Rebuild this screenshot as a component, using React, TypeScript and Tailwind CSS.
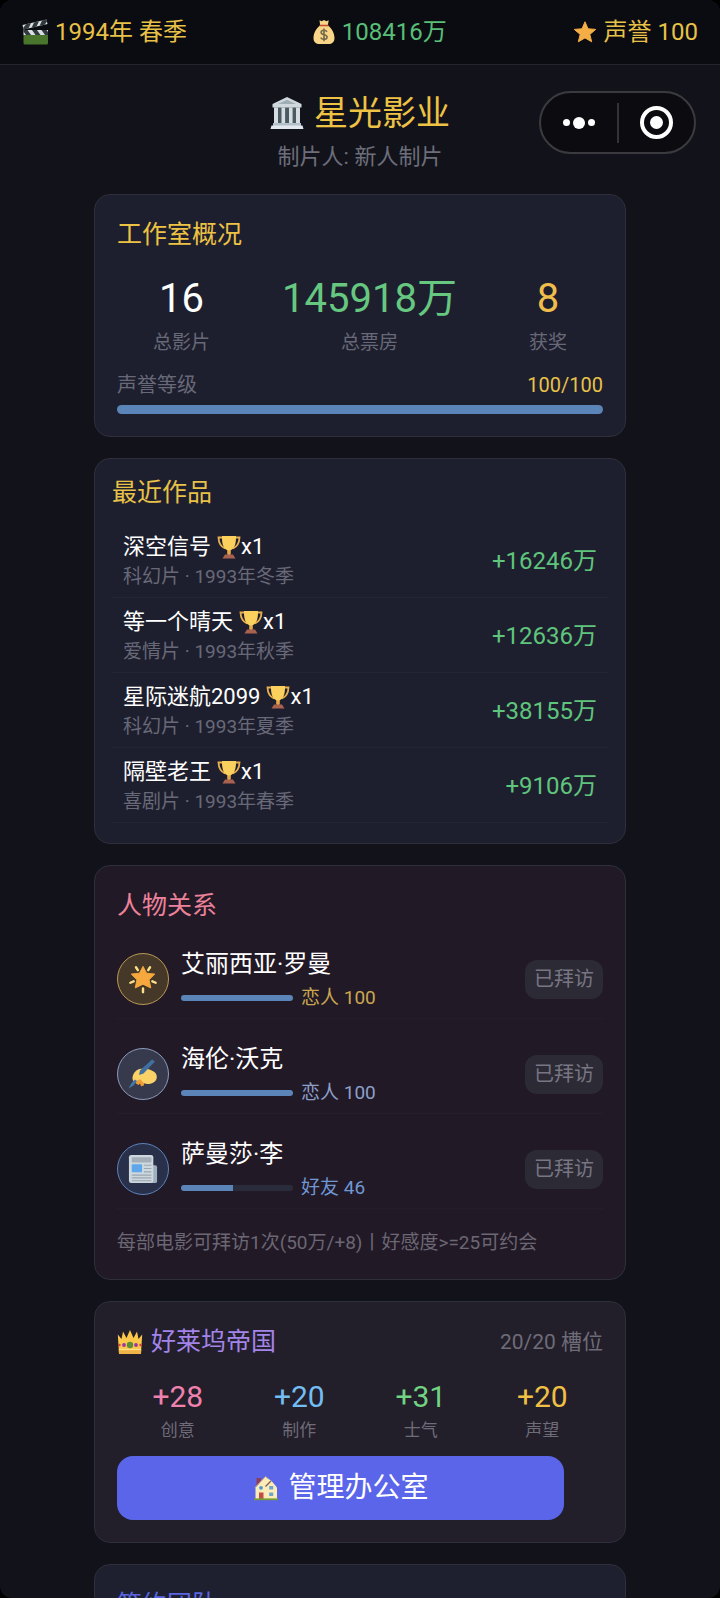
import type { ReactNode } from "react";

const works = [
  { name: "深空信号", meta: "科幻片 · 1993年冬季", income: "+16246万" },
  { name: "等一个晴天", meta: "爱情片 · 1993年秋季", income: "+12636万" },
  { name: "星际迷航2099", meta: "科幻片 · 1993年夏季", income: "+38155万" },
  { name: "隔壁老王", meta: "喜剧片 · 1993年春季", income: "+9106万" },
];

const people = [
  { name: "艾丽西亚·罗曼", level: "恋人", value: 100, icon: <GlowStar />, ring: "border-[#b89a55] bg-[#453829]", text: "text-[#c9a74f]" },
  { name: "海伦·沃克", level: "恋人", value: 100, icon: <WritingHand />, ring: "border-[#8b9bbd] bg-[#373a4c]", text: "text-[#8c9fc9]" },
  { name: "萨曼莎·李", level: "好友", value: 46, icon: <Newspaper />, ring: "border-[#5c83ba] bg-[#29304a]", text: "text-[#6f97d4]" },
];

const bonuses = [
  { value: "+28", label: "创意", color: "text-[#ee82ae]" },
  { value: "+20", label: "制作", color: "text-[#74bdf2]" },
  { value: "+31", label: "士气", color: "text-[#72d382]" },
  { value: "+20", label: "声望", color: "text-[#f0c044]" },
];

function Clapper() {
  return (
    <svg viewBox="0 0 26 26" className="size-[26px] shrink-0" aria-hidden="true">
      <path d="M0.5 6 L24.5 0.5 L25.5 5 L1.5 10.5z" fill="#d9dfe3" />
      <path d="M4 5.2 L9 4 L6.5 9.4 L1.5 10.5 L1.2 9z M12 3.4 L17 2.2 L14.5 7.6 L9.6 8.7z M20 1.5 L24.5 0.5 L25 2.5 L22.5 5.7 L17.6 6.8z" fill="#31393e" />
      <path d="M1.5 11h24.5v5H1.5z" fill="#d9dfe3" />
      <path d="M1.5 11h4l3.5 5h-5l-2.5-3.5z M10 11h5l3.5 5h-5z M19.5 11h5l1.5 2v3h-3z" fill="#31393e" />
      <path d="M1.5 16h24.5v8a1.5 1.5 0 0 1-1.5 1.5H3A1.5 1.5 0 0 1 1.5 24z" fill="#4a752c" />
    </svg>
  );
}

function MoneyBag() {
  return (
    <svg viewBox="0 0 22 26" className="h-[26px] w-[22px] shrink-0" aria-hidden="true">
      <path d="M6.5 1.2l2.2 1L11 1l2.3 1.2 2.4-1-.9 5.3C18.5 9 21.5 14 21.5 19c0 4-2.5 6-6 6h-9c-3.5 0-6-2-6-6 0-5 3-10 6.7-12.5z" fill="#f8d587" />
      <path d="M7 6.500h8" stroke="#c04a33" strokeWidth="1.4" strokeLinecap="round" />
      <path d="M14 12.8c-.6-1-1.700-1.500-3-1.500-1.700 0-2.900.9-2.900 2.200 0 3 6 1.500 6 4.600 0 1.400-1.300 2.300-3.100 2.300-1.500 0-2.700-.6-3.300-1.700M11 9.500v12.700" stroke="#756a4c" strokeWidth="1.6" fill="none" />
    </svg>
  );
}

function Star() {
  return (
    <svg viewBox="0 0 24 24" className="size-6 shrink-0" aria-hidden="true">
      <path d="M12 1.8l3 7 7.700.6-5.900 5 1.900 7.400L12 17.900l-6.700 3.900 1.900-7.400-5.900-5 7.700-.6z" fill="#f5ad45" stroke="#f5ad45" strokeWidth="1" strokeLinejoin="round" />
    </svg>
  );
}

function Temple() {
  return (
    <svg viewBox="0 0 34 34" className="size-[34px] shrink-0" aria-hidden="true">
      <path d="M4 10h26v19H4z" fill="#4b5960" />
      <path d="M17 1L31.500 8v3.500H2.500V8z" fill="#cfd8dd" />
      <path d="M17 3.800l9 4.200H8z" fill="#9fadb5" />
      <path d="M4 11.500h4v16H4zM11.500 11.500h3.600v16h-3.600zM19 11.500h3.600v16H19zM26 11.500h4v16h-4z" fill="#d5dde3" />
      <path d="M3 27h28v3H3z" fill="#b4c0c8" />
      <path d="M1.500 29.500h31L33.500 33H.5z" fill="#e3e8ef" />
    </svg>
  );
}

function Trophy() {
  return (
    <svg viewBox="0 0 24 24" className="size-6 shrink-0" aria-hidden="true">
      <path d="M5.500 2.500H1.500c.2 5 2 9 6.500 11M18.500 2.500h4c-.2 5-2 9-6.500 11" fill="none" stroke="#e9ae50" strokeWidth="1.800" />
      <path d="M5 1h14c.2 6.500-1 12-4.500 13.800l-1 .7V19h-3v-3.500l-1-.7C6 13 4.800 7.500 5 1z" fill="#fbd05c" />
      <path d="M10.500 15.500h3V20h-3z" fill="#e8a748" />
      <path d="M8 19.500h8l2.500 4h-13z" fill="#a9624e" />
    </svg>
  );
}

function GlowStar() {
  return (
    <svg viewBox="0 0 32 32" className="size-[30px]" aria-hidden="true">
      <path d="M8.500 3.500l2 3M23.500 3.500l-2 3M2.500 20l3.500-1.500M29.500 20l-3.500-1.500M16 26v4" stroke="#fbe08a" strokeWidth="2.600" strokeLinecap="round" />
      <path d="M16 2.500l3.800 7.300 8.700.9-6 6.200 1.800 8.600L16 21.600l-8.300 3.900 1.800-8.600-6-6.200 8.700-.9z" fill="#f6a83e" stroke="#f6a83e" strokeLinejoin="round" />
    </svg>
  );
}

function WritingHand() {
  return (
    <svg viewBox="0 0 30 30" className="size-[30px]" aria-hidden="true">
      <path d="M6 20l2 4.500 2.500 1.500 1.500-1.500 1 2.800 2.500-.5 1.500-4.300-4-4z" fill="#ee9f37" />
      <path d="M4.500 18.500c.5-3.500 3-7.500 7-8.500 3.500-.9 6-.8 9 .2 4.500 1.300 8.500 3.500 8.300 8-.2 4.300-4.500 6.800-9 6.800-3.300 0-4.800-1.500-6.800-4-1.500-1-3.500 0-5.500 2.500-1.800-.5-3.300-2.800-3-5z" fill="#fbd268" />
      <path d="M24 .5l3 2L15.500 14.500 11 16l1-4.500z" fill="#40709f" />
      <path d="M7 20.500l2 1.500-3.500 4.500-5 3L3.500 24z" fill="#4577a3" />
    </svg>
  );
}

function Newspaper() {
  return (
    <svg viewBox="0 0 32 32" className="size-[30px]" aria-hidden="true">
      <path d="M24 12h5a2 2 0 0 1 2 2v15a2 2 0 0 1-2 2h-5z" fill="#9fb0bd" />
      <rect x="1" y="1" width="26" height="30" rx="2.500" fill="#cdd7de" />
      <rect x="4" y="3.500" width="21" height="5.500" rx="1" fill="#a3afb8" />
      <rect x="4" y="11" width="11" height="8.500" rx="1" fill="#5ea7ea" />
      <path d="M17 12h8M17 15.500h8M17 19h8M4 22.500h21M4 25.500h21M4 28.500h21" stroke="#9aa8b1" strokeWidth="1.200" />
    </svg>
  );
}

function Crown() {
  return (
    <svg viewBox="0 0 26 26" className="size-[26px] shrink-0" aria-hidden="true">
      <path d="M2 24.500L.8 5.500 4.500 10 6 2.500 9.500 9 13 1l3.500 8L20 2.500 21.500 10l3.700-4.500L24 24.500z" fill="#fbc84b" />
      <path d="M1.700 20.500h22.600L24 25H2z" fill="#f0b548" />
      <path d="M2 20.500h22" stroke="#fde08a" strokeWidth="1.200" />
      <circle cx="13" cy="16" r="3.200" fill="#5d8f38" />
      <circle cx="7" cy="16" r="1.900" fill="#9a36a8" />
      <circle cx="19" cy="16" r="1.900" fill="#9a36a8" />
      <circle cx="2.400" cy="16" r="1.300" fill="#d9433e" />
      <circle cx="23.600" cy="16" r="1.300" fill="#d9433e" />
    </svg>
  );
}

function House() {
  return (
    <svg viewBox="0 0 26 26" className="size-[26px] shrink-0" aria-hidden="true">
      <path d="M3.500 3h4.500v8H3.500z" fill="#8c3f5f" />
      <path d="M2.500 12.500L12.500 1.500l6 4.500 5.500 6.500v12H2.500z" fill="#fbecb8" />
      <path d="M2 12.500L12.500 1.500l3 2.500" fill="none" stroke="#b9a08e" strokeWidth="1" />
      <path d="M12.500 11.500L18 6" fill="none" stroke="#7d5a50" strokeWidth="1.200" />
      <circle cx="8" cy="12.800" r="1.900" fill="#4f97cf" />
      <path d="M16.200 11h4v3.600h-4zM16.200 17.500h4v3.600h-4z" fill="#6aa5cf" />
      <path d="M6 17.500h4.500v7H6z" fill="#c04f4a" />
      <path d="M1 24.300h24" stroke="#759c35" strokeWidth="1.800" />
    </svg>
  );
}

function Card(props: { className: string; children: ReactNode }) {
  return <section className={`rounded-2xl border border-[#2e2f3b] ${props.className}`}>{props.children}</section>;
}

function Meter(props: { value: number; label: string; className: string }) {
  return (
    <div role="progressbar" aria-label={props.label} aria-valuenow={props.value} className={`overflow-hidden rounded-full bg-[#2b2c3b] ${props.className}`}>
      <div className="h-full bg-[#5b84b8]" style={{ width: `${props.value}%` }} />
    </div>
  );
}

function Capsule() {
  return (
    <div className="absolute top-[91px] right-6 flex h-[63px] w-[157px] items-center rounded-full border-2 border-[#3b3b3f] bg-[#0b0b10]">
      <button aria-label="更多" className="flex flex-1 items-center justify-center gap-[3px]">
        <span className="size-[7px] rounded-full bg-white" />
        <span className="size-3 rounded-full bg-white" />
        <span className="size-[7px] rounded-full bg-white" />
      </button>
      <span className="h-10 w-0.5 bg-[#343438]" />
      <button aria-label="关闭" className="flex flex-1 justify-center">
        <span className="flex size-[33px] items-center justify-center rounded-full border-4 border-white">
          <span className="size-[13px] rounded-full bg-white" />
        </span>
      </button>
    </div>
  );
}

export default function App() {
  return (
    <div className="h-dvh bg-black font-[Roboto,'Noto_Sans_CJK_SC',sans-serif]">
      <div className="relative flex h-full flex-col overflow-hidden rounded-xl bg-[#12131a] text-white">
        <header className="flex h-[65px] shrink-0 items-center justify-between border-b border-[#24252d] bg-[#0b0c11] px-[22px] text-2xl text-[#e8c148]">
          <div className="flex items-center gap-[7px]"><Clapper />1994年 春季</div>
          <div className="flex items-center gap-[7px] text-[#58be78]"><MoneyBag />108416万</div>
          <div className="flex items-center gap-[7px]"><Star />声誉 100</div>
        </header>
        <Capsule />

        <main className="flex flex-1 flex-col gap-[21px] overflow-y-auto px-[94px] pt-6 [scrollbar-width:none]">
          <div className="text-center">
            <h1 className="flex items-center justify-center gap-2.5 text-[34px] leading-[48px] text-[#eec244]"><Temple />星光影业</h1>
            <p className="mt-1 text-[22px] leading-8 text-[#6d6e7b]">制片人: 新人制片</p>
          </div>

          <Card className="bg-[#1e1f2e] p-[22px]">
            <h2 className="text-[25px] leading-9 text-[#eec244]">工作室概况</h2>
            <div className="mt-4 flex justify-around text-center text-[19px] leading-7 text-[#686978]">
              <div><p className="text-[40px] leading-[60px] text-white">16</p>总影片</div>
              <div><p className="text-[40px] leading-[60px] text-[#66c880]">145918万</p>总票房</div>
              <div><p className="text-[40px] leading-[60px] text-[#f0bd4c]">8</p>获奖</div>
            </div>
            <div className="mt-3.5 flex justify-between text-xl leading-7 text-[#686978]">
              声誉等级<span className="text-[#e8c148]">100/100</span>
            </div>
            <Meter value={100} label="声誉等级" className="mt-1.5 h-[9px]" />
          </Card>

          <Card className="bg-[#1e1f2e] px-[17px] pt-4 pb-5">
            <h2 className="text-[25px] leading-9 text-[#e8c148]">最近作品</h2>
            <ul className="mt-3">
              {works.map((w) => (
                <li key={w.name} className="flex items-center justify-between border-b border-[#242533] px-[11px] pt-2 pb-1.5">
                  <div>
                    <h3 className="flex items-center text-[22px] leading-8"><span className="mr-1.5">{w.name}</span><Trophy />x1</h3>
                    <p className="text-[19px] leading-7 text-[#686978]">{w.meta}</p>
                  </div>
                  <span className="text-2xl text-[#5fc57c]">{w.income}</span>
                </li>
              ))}
            </ul>
          </Card>

          <Card className="bg-[#221927] p-[22px]">
            <h2 className="text-[25px] leading-9 text-[#ec8299]">人物关系</h2>
            <ul className="mt-4 flex flex-col gap-4">
              {people.map((p) => (
                <li key={p.name} className="flex items-center border-b border-[#251d2a] py-1.5">
                  <div className={`flex size-[52px] shrink-0 items-center justify-center rounded-full border ${p.ring}`}>{p.icon}</div>
                  <div className="ml-3 flex-1">
                    <h3 className="text-2xl leading-9">{p.name}</h3>
                    <div className="mt-0.5 flex items-center gap-2">
                      <Meter value={p.value} label={p.name} className="h-1.5 w-28" />
                      <span className={`text-[19px] leading-7 ${p.text}`}>{p.level} {p.value}</span>
                    </div>
                  </div>
                  <button disabled className="h-[39px] rounded-xl bg-[#2c2a35] px-[9px] text-xl text-[#777682]">已拜访</button>
                </li>
              ))}
            </ul>
            <p className="mt-5 text-[19px] leading-7 text-[#6b6773]">每部电影可拜访1次(50万/+8)丨好感度&gt;=25可约会</p>
          </Card>

          <Card className="bg-[#221e2a] p-[22px]">
            <div className="flex items-center justify-between">
              <h2 className="flex items-center gap-2 text-[25px] leading-9 text-[#a385ea]"><Crown />好莱坞帝国</h2>
              <span className="text-[21px] leading-9 text-[#6e6c78]">20/20 槽位</span>
            </div>
            <div className="mt-4 flex justify-around text-center">
              {bonuses.map((b) => (
                <div key={b.label}>
                  <p className={`text-[30px] leading-[42px] ${b.color}`}>{b.value}</p>
                  <p className="text-[17px] leading-6 text-[#6e6c78]">{b.label}</p>
                </div>
              ))}
            </div>
            <button className="mt-3.5 flex h-16 w-[92%] items-center justify-center gap-2.5 rounded-2xl bg-[#5b65e9] text-[28px]"><House />管理办公室</button>
          </Card>

          <Card className="bg-[#1e2030] p-[22px]">
            <h2 className="text-[25px] leading-9 text-[#5b65e0]">签约团队</h2>
          </Card>
        </main>
      </div>
    </div>
  );
}
